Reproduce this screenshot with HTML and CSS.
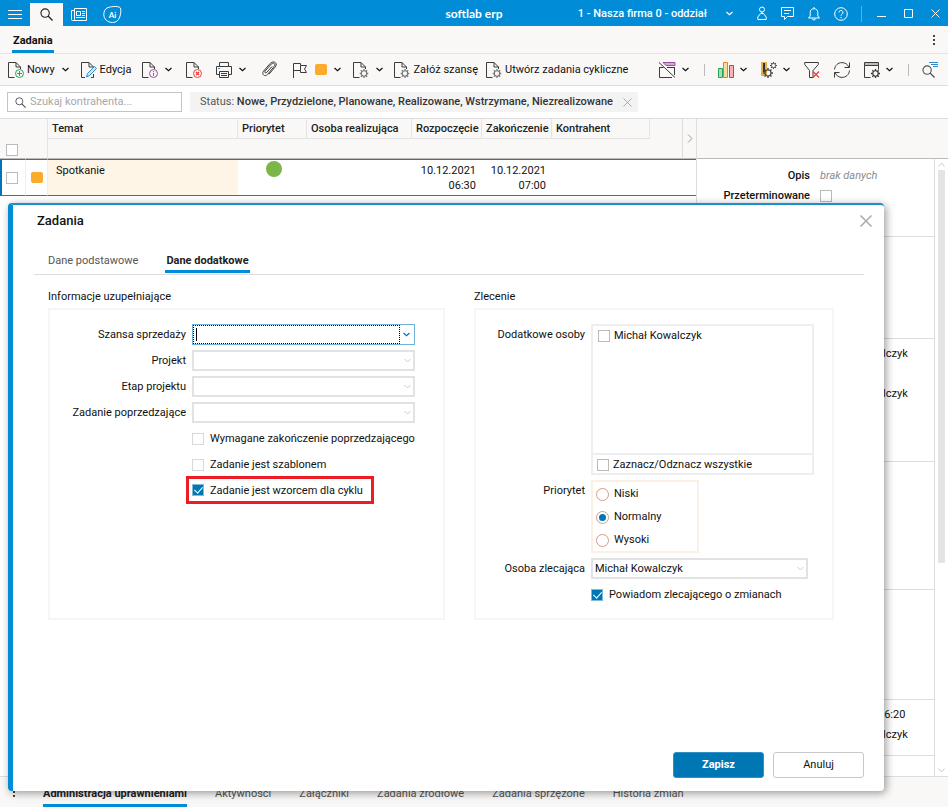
FILE: index.html
```html
<!DOCTYPE html>
<html lang="pl">

<head>
    <meta charset="utf-8">
    <title>softlab erp</title>
    <link rel="stylesheet" href="styles.css">
</head>
<body>
    <!-- shared icon parts -->
    <svg class="defs" width="0" height="0">
        <symbol id="doc" viewBox="0 0 16 16">
            <path d="M6.500 15.500H.5V.5H8l4.500 4.500V7M8 .5V5h4.500" fill="none" stroke="#3c3c3c"/>
        </symbol>
        <symbol id="cog" viewBox="0 0 10 10">
            <circle cx="5" cy="5" r="3" fill="none" stroke="currentColor" stroke-width="1.200"/>
            <path d="M5 0v2M5 8v2M0 5h2M8 5h2M1.500 1.500l1.300 1.300M7.200 7.200l1.300 1.300M1.500 8.500l1.300-1.300M7.200 2.800l1.300-1.300" stroke="currentColor" stroke-width="1.500"/>
        </symbol>
        <symbol id="doc-cog" viewBox="0 0 16 16">
            <use href="#doc" width="16" height="16"/>
            <use href="#cog" x="6.500" y="7" width="9" height="9" color="#777"/>
        </symbol>
        <symbol id="chev" viewBox="0 0 7 5">
            <path d="M.5 1l3 2.800L6.500 1" fill="none" stroke="currentColor" stroke-width="1.200"/>
        </symbol>
        <symbol id="lens" viewBox="0 0 14 14">
            <circle cx="5.500" cy="5.500" r="4.500" fill="none" stroke="currentColor" stroke-width="1.200"/>
            <path d="M8.700 8.700L13.500 13.500" stroke="currentColor" stroke-width="1.400"/>
        </symbol>
    </svg>

    <header class="topbar">
        <div class="top-left">
            <button class="top-btn" aria-label="Menu"><svg width="14" height="11" stroke="#fff"><path d="M0 1.500h14M0 5.500h14M0 9.500h14"/></svg></button>
            <button class="top-btn active" aria-label="Szukaj"><svg width="13" height="13" color="#222"><use href="#lens"/></svg></button>
            <button class="top-btn" aria-label="Aktualności"><svg width="16" height="14" fill="none" stroke="#fff"><path d="M3.500 .5h12v12h-14a1 1 0 0 1-1-1v-9h3M3.500 .5v11q0 1-1 1M5.500 3.500h4v4h-4zM11 3.500h3M11 5.500h3M11 7.500h3M5 9.500h9"/></svg></button>
            <button class="top-btn" aria-label="Asystent"><svg width="19" height="18" fill="none" stroke="#fff"><path d="M5 1.500C9 .3 17.500-.5 17.800 3c.2 6-1.300 13.500-8.300 13.500C4.500 16.500.8 13 .8 8.500.8 5.500 2 2.500 5 1.500z"/><text class="ai" x="9.500" y="12" text-anchor="middle">Ai</text></svg></button>
        </div>
        <div class="brand">softlab erp</div>
        <div class="top-right">
            <button class="company">1 - Nasza firma 0 - oddział <svg width="7" height="5"><use href="#chev"/></svg></button>
            <button class="top-icon" aria-label="Użytkownik"><svg width="10" height="15" fill="none" stroke="#fff"><circle cx="5" cy="3.500" r="2.500"/><path d="M3.500 7.500L.8 11v2.500h8.400V11L6.500 7.500zM5 6v1.500"/></svg></button>
            <button class="top-icon" aria-label="Wiadomości"><svg width="13" height="13" fill="none" stroke="#fff"><path d="M.5 .5h12v9H6.500l-3 3v-3h-3zM3 3.500h7M3 6.500h5"/></svg></button>
            <button class="top-icon" aria-label="Powiadomienia"><svg width="12" height="14" fill="none" stroke="#fff"><path d="M.5 11h11L9.800 9V5.500C9.800 3 8.200 1.700 6 1.700S2.200 3 2.200 5.500V9zM6 0v1.500M4.500 11.500a1.500 1.500 0 0 0 3 0"/></svg></button>
            <button class="top-icon" aria-label="Pomoc"><svg width="14" height="14" fill="none" stroke="#fff"><circle cx="7" cy="7" r="6.300"/><path d="M5 5.500a2 2 0 1 1 3 1.700q-1 .6-1 1.500M7 10v1.200"/></svg></button>
            <span class="top-line"></span>
            <button class="win-btn" aria-label="Minimalizuj"><svg width="9" height="9" stroke="#fff"><path d="M0 7.500h9"/></svg></button>
            <button class="win-btn" aria-label="Maksymalizuj"><svg width="9" height="9" fill="none" stroke="#fff"><path d="M.5 .5h8v8h-8z"/></svg></button>
            <button class="win-btn" aria-label="Zamknij"><svg width="9" height="9" stroke="#fff"><path d="M.5 .5l8 8M8.500 .5l-8 8"/></svg></button>
        </div>
    </header>

    <nav class="page-tabs">
        <a class="page-tab" href="#">Zadania</a>
        <button class="dots" aria-label="Więcej"><svg width="2" height="10" fill="#444"><path d="M0 0h2v2H0zM0 4h2v2H0zM0 8h2v2H0z"/></svg></button>
    </nav>

    <div class="toolbar">
        <button class="tool text new"><svg width="16" height="16"><use href="#doc"/><circle cx="11.500" cy="11.500" r="4" fill="#f9f8f7" stroke="#22a559"/><path d="M9 11.500h5M11.500 9v5" stroke="#22a559"/></svg> Nowy <svg class="arrow" width="7" height="5"><use href="#chev"/></svg></button>
        <button class="tool text"><svg width="16" height="16"><path d="M4 15.500H.5V.5H8l4.500 4.500M8 .5V5h4.500M12.500 12v3.500H10" fill="none" stroke="#3c3c3c"/><path d="M5.500 15l1-3.500 7-7 2 2-7 7z" fill="#cfe6f6" stroke="#2c8bcb"/></svg> Edycja</button>
        <button class="tool" aria-label="Informacje"><svg width="16" height="16"><use href="#doc"/><circle cx="11.500" cy="11.500" r="4" fill="#f9f8f7" stroke="#9b4f9f"/><path d="M11.500 9v1M11.500 10.800v3" stroke="#9b4f9f"/></svg><svg class="arrow" width="7" height="5"><use href="#chev"/></svg></button>
        <button class="tool" aria-label="Usuń"><svg width="16" height="16"><use href="#doc"/><circle cx="11.500" cy="11.500" r="4" fill="#f9f8f7" stroke="#e8413c"/><path d="M10 10l3 3M13 10l-3 3" stroke="#e8413c" stroke-width="1.300"/></svg></button>
        <button class="tool" aria-label="Drukuj"><svg width="16" height="16" fill="none" stroke="#3c3c3c"><path d="M3.500 4.500v-4h9v4M3.500 12.500h-3v-8h15v8h-3M3.500 9.500h9v6h-9zM5 11.500h6M5 13.500h6"/><path d="M2 6.500h2" stroke="#2c8bcb"/></svg><svg class="arrow" width="7" height="5"><use href="#chev"/></svg></button>
        <button class="tool" aria-label="Załącznik"><svg width="18" height="17" fill="none" stroke="#3c3c3c"><path d="M12 5.500L6.800 11.300c-1.300 1.400-2.800 0-1.600-1.400L11.300 3c2-2.100 4.700.1 2.900 2.400L7.500 13.500c-2.500 2.800-6.300-.2-4-3.300L9.500 3.200c1.500-2 4.500-3.200 6-1.400 1.400 1.500.6 3-.5 4.400l-6 7"/></svg></button>
        <button class="tool" aria-label="Flaga"><svg width="16" height="16" fill="none" stroke="#3c3c3c"><path d="M1.500 16V1.500h7v2h6l-2 3.500 2 3.500h-6v-2h-7M8.500 3.500v5"/></svg></button>
        <button class="tool color" aria-label="Kolor"><span class="square"></span><svg class="arrow" width="7" height="5"><use href="#chev"/></svg></button>
        <button class="tool" aria-label="Operacje"><svg width="16" height="16"><use href="#doc-cog"/></svg><svg class="arrow" width="7" height="5"><use href="#chev"/></svg></button>
        <button class="tool text"><svg width="16" height="16"><use href="#doc-cog"/></svg> Załóż szansę</button>
        <button class="tool text"><svg width="16" height="16"><use href="#doc-cog"/></svg> Utwórz zadania cykliczne</button>

        <div class="tools-right">
            <button class="tool" aria-label="Widok"><svg width="17" height="16" fill="none" stroke="#3c3c3c"><path d="M4 .5h12v3H7z" fill="#d9a6d9" stroke="#9b4f9f"/><path d="M.5 5v10.500H13M15.500 5v8M.5 5.500h4M8 5.500h8M0 .5l16 15"/></svg><svg class="arrow" width="7" height="5"><use href="#chev"/></svg></button>
            <span class="tool-line"></span>
            <button class="tool" aria-label="Wykres"><svg width="16" height="16"><path d="M.5 6.500h4v9h-4z" fill="#a9dcb9" stroke="#22a559"/><path d="M5.500 .5h4v15h-4z" fill="#fbdca0" stroke="#ee7d22"/><path d="M11.500 3.500h4v12h-4z" fill="#f5b5b5" stroke="#dc3545"/></svg><svg class="arrow" width="7" height="5"><use href="#chev"/></svg></button>
            <button class="tool" aria-label="Narzędzia"><svg width="16" height="16" color="#4a4a4a"><path d="M0 0h6v14H0z" fill="#e0b24c"/><path d="M2 1h2v9H2z" fill="#333"/><use href="#cog" x="2" y="6" width="10" height="10"/><use href="#cog" x="9" y="0" width="7" height="7"/></svg><svg class="arrow" width="7" height="5"><use href="#chev"/></svg></button>
            <button class="tool" aria-label="Wyczyść filtr"><svg width="16" height="16" fill="none" stroke="#3c3c3c"><path d="M.7 .5h13.600v2L9 8.500M.7 .5v2L5.500 8.500v7H9v-7"/><path d="M9 9.500l6 6M15 9.500l-6 6" stroke="#e8413c" stroke-width="1.300"/></svg></button>
            <button class="tool" aria-label="Odśwież"><svg width="16" height="16" fill="none" stroke="#3c3c3c"><path d="M.5 7.500C.8 3.500 4 .6 8 .6c3.200 0 5.800 1.800 7 4.900M15.500 .5v5h-5M15.500 8.500c-.3 4-3.500 6.900-7.500 6.900-3.200 0-5.800-1.800-7-4.900M.5 15.500v-5h5"/></svg></button>
            <button class="tool" aria-label="Ustawienia okna"><svg width="16" height="16" fill="none" stroke="#3c3c3c" color="#333"><path d="M.5 .5h14v3H.5z" fill="#bbb"/><path d="M6.500 15.500h-6v-12M14.500 3.500v4"/><use href="#cog" x="7" y="7" width="9" height="9"/></svg><svg class="arrow" width="7" height="5"><use href="#chev"/></svg></button>
            <span class="tool-line"></span>
            <button class="tool" aria-label="Wyszukaj"><svg width="16" height="16" color="#555"><use href="#lens" y="3" width="13" height="13"/><path d="M7 .5h9M9 2.500h7M11 4.500h5" stroke="#2c8bcb"/></svg></button>
        </div>
    </div>

    <div class="filters">
        <label class="search"><svg width="11" height="11" color="#555"><use href="#lens"/></svg><input type="text" placeholder="Szukaj kontrahenta..." aria-label="Szukaj kontrahenta"></label>
        <div class="chip">
            <span>Status: <b>Nowe, Przydzielone, Planowane, Realizowane, Wstrzymane, Niezrealizowane</b></span>
            <button class="chip-close" aria-label="Usuń filtr"><svg width="9" height="9" stroke="#aaa"><path d="M.5 .5l8 8M8.500 .5l-8 8"/></svg></button>
        </div>
    </div>

    <main class="content">
        <section class="list">
            <table class="tasks">
                <colgroup>
                    <col class="w-check"><col class="w-color"><col class="w-subject"><col class="w-prio"><col class="w-person"><col class="w-date"><col class="w-date"><col class="w-client"><col><col class="w-more">
                </colgroup>
                <thead>
                    <tr>
                        <td></td>
                        <td></td>
                        <th>Temat</th>
                        <th>Priorytet</th>
                        <th>Osoba realizująca</th>
                        <th>Rozpoczęcie</th>
                        <th>Zakończenie</th>
                        <th>Kontrahent</th>
                        <td></td>
                        <td class="more" rowspan="2"><button aria-label="Więcej kolumn"><svg width="6" height="9" fill="none" stroke="#999"><path d="M1 .5l4 4-4 4"/></svg></button></td>
                    </tr>
                    <tr class="head-filter">
                        <td class="check"><input type="checkbox" aria-label="Zaznacz wszystkie"></td>
                        <td class="edge"></td>
                        <td colspan="7"></td>
                    </tr>
                </thead>
                <tbody>
                    <tr class="task">
                        <td class="check"><input type="checkbox" aria-label="Zaznacz Spotkanie"></td>
                        <td class="mark"><span class="square"></span></td>
                        <td class="subject">Spotkanie</td>
                        <td class="prio"><span class="circle"></span></td>
                        <td></td>
                        <td class="date">10.12.2021<br>06:30</td>
                        <td class="date">10.12.2021<br>07:00</td>
                        <td colspan="3"></td>
                    </tr>
                </tbody>
            </table>
        </section>

        <aside class="details">
            <div class="details-head"></div>
            <div class="details-body">
                <div class="details-list">
                    <div class="group g1">
                        <div class="detail"><span class="name">Opis</span><i>brak danych</i></div>
                        <div class="detail"><label class="name" for="overdue">Przeterminowane</label><input type="checkbox" id="overdue"></div>
                    </div>
                    <div class="group g2"></div>
                    <div class="group g3">
                        <div class="detail"><span class="name"></span>Michał Kowalczyk</div>
                        <div class="detail"></div>
                        <div class="detail"><span class="name"></span>Michał Kowalczyk</div>
                    </div>
                    <div class="group g4"></div>
                    <div class="group g5"></div>
                    <div class="group g6">
                        <div class="detail"><span class="name"></span>10.12.2021 06:20</div>
                        <div class="detail"><span class="name"></span>Michał Kowalczyk</div>
                    </div>
                </div>
                <div class="scroll">
                    <svg width="7" height="5" fill="none" stroke="#ccc"><path d="M.5 4.500l3-3.500 3 3.500"/></svg>
                    <div class="track"><div class="thumb"></div></div>
                    <svg width="7" height="5" fill="none" stroke="#ccc"><path d="M.5 .5l3 3.500 3-3.500"/></svg>
                </div>
            </div>
        </aside>
    </main>

    <nav class="bottom-tabs">
        <button class="dots" aria-label="Więcej"><svg width="2" height="10" fill="#444"><path d="M0 0h2v2H0zM0 4h2v2H0zM0 8h2v2H0z"/></svg></button>
        <a class="bottom-tab active" href="#">Administracja uprawnieniami</a>
        <a class="bottom-tab" href="#">Aktywności</a>
        <a class="bottom-tab" href="#">Załączniki</a>
        <a class="bottom-tab" href="#">Zadania źródłowe</a>
        <a class="bottom-tab" href="#">Zadania sprzężone</a>
        <a class="bottom-tab" href="#">Historia zmian</a>
    </nav>

    <form class="dialog" role="dialog" aria-labelledby="dialog-title">
        <div class="dialog-head">
            <h1 id="dialog-title">Zadania</h1>
            <button type="button" class="close" aria-label="Zamknij okno"><svg width="12" height="12" stroke="#aaa" stroke-width="1.500"><path d="M.5 .5l11 11M11.500 .5l-11 11"/></svg></button>
        </div>
        <div class="dialog-tabs">
            <a class="dialog-tab" href="#">Dane podstawowe</a>
            <a class="dialog-tab active" href="#">Dane dodatkowe</a>
        </div>
        <div class="columns">
            <section>
                <h2>Informacje uzupełniające</h2>
                <div class="box info">
                    <label for="chance">Szansa sprzedaży</label>
                    <div class="combo">
                        <input type="text" id="chance">
                        <button type="button" aria-label="Rozwiń"><svg width="7" height="5"><use href="#chev"/></svg></button>
                    </div>
                    <label for="project">Projekt</label>
                    <select id="project"><option></option></select>
                    <label for="stage">Etap projektu</label>
                    <select id="stage"><option></option></select>
                    <label for="previous">Zadanie poprzedzające</label>
                    <select id="previous"><option></option></select>
                    <label class="tick"><input type="checkbox"> Wymagane zakończenie poprzedzającego</label>
                    <label class="tick"><input type="checkbox"> Zadanie jest szablonem</label>
                    <label class="tick marked"><input type="checkbox" checked> Zadanie jest wzorcem dla cyklu</label>
                </div>
            </section>
            <section>
                <h2>Zlecenie</h2>
                <div class="box order">
                    <span class="label">Dodatkowe osoby</span>
                    <div class="people">
                        <div class="people-list"><label><input type="checkbox"> Michał Kowalczyk</label></div>
                        <label class="people-all"><input type="checkbox"> Zaznacz/Odznacz wszystkie</label>
                    </div>
                    <span class="label">Priorytet</span>
                    <div class="radios">
                        <label><input type="radio" name="prio"> Niski</label>
                        <label><input type="radio" name="prio" checked> Normalny</label>
                        <label><input type="radio" name="prio"> Wysoki</label>
                    </div>
                    <label for="owner">Osoba zlecająca</label>
                    <select id="owner"><option>Michał Kowalczyk</option></select>
                    <label class="tick"><input type="checkbox" checked> Powiadom zlecającego o zmianach</label>
                </div>
            </section>
        </div>
        <div class="dialog-foot">
            <button type="button" class="btn save">Zapisz</button>
            <button type="button" class="btn">Anuluj</button>
        </div>
    </form>
</body>

</html>
```

FILE: styles.css
```css
* {
    box-sizing: border-box;
}
html, body {
    height: 100%;
}
body {
    display: flex;
    flex-direction: column;
    margin: 0;
    overflow: hidden;
    font: 11px/16px Roboto, "Liberation Sans", sans-serif;
    color: #111;
    background: #fff;
}
button, input, select {
    font: inherit;
    color: inherit;
}
button {
    padding: 0;
    border: none;
    background: none;
    cursor: pointer;
}
a {
    color: inherit;
    text-decoration: none;
}
svg {
    display: block;
    flex: none;
}
.defs {
    position: absolute;
}

/* check boxes and radios */
input[type=checkbox], input[type=radio] {
    appearance: none;
    display: grid;
    place-content: center;
    flex: none;
    width: 12px;
    height: 12px;
    margin: 0;
    border: 1px solid #bbb;
    background: #fff;
}
input[type=checkbox]:checked {
    border-color: #7fbadb;
    background: #0077b5;
}
input[type=checkbox]:checked::after {
    content: "";
    width: 4px;
    height: 7px;
    margin-bottom: 2px;
    border: solid #fff;
    border-width: 0 1px 1px 0;
    transform: rotate(42deg);
}
input[type=radio] {
    width: 13px;
    height: 13px;
    border-color: #d39a8c;
    border-radius: 50%;
}
input[type=radio]:checked::after {
    content: "";
    width: 7px;
    height: 7px;
    border-radius: 50%;
    background: #0077b5;
}

/* top bar */
.topbar {
    display: grid;
    grid-template-columns: 1fr auto 1fr;
    flex: none;
    height: 26px;
    color: #fff;
    background: #008cd6;
}
.top-left, .top-right {
    display: flex;
    align-items: center;
}
.top-right {
    justify-content: flex-end;
    padding-right: 8px;
}
.top-btn {
    display: flex;
    align-items: center;
    height: 24px;
    margin-top: 2px;
    padding: 0 8px;
}
.top-btn.active {
    padding: 0 10px;
    background: #f9f8f7;
}
.ai {
    font: 700 8px Lato, sans-serif;
    fill: #fff;
    stroke: none;
}
.brand {
    font: 700 12px/27px Lato, sans-serif;
}
.company {
    display: flex;
    align-items: center;
    gap: 19px;
    margin-right: 10px;
    line-height: 24px;
    font-weight: 500;
}
.top-icon {
    margin-left: 14px;
}
.top-line {
    width: 1px;
    height: 16px;
    margin-left: 13px;
    background: #55b2e3;
}
.win-btn {
    margin-left: 18px;
}
.top-line + .win-btn {
    margin-left: 15px;
}

/* page tabs */
.page-tabs {
    display: flex;
    justify-content: space-between;
    flex: none;
    height: 28px;
    padding: 0 13px 0 12px;
    border-bottom: 1px solid #e4e4e4;
    background: #f9f8f7;
}
.page-tab {
    padding: 6px 1px 0;
    border-bottom: 3px solid #008cd6;
    font-weight: 700;
    line-height: 18px;
}

/* toolbar */
.toolbar {
    display: flex;
    align-items: center;
    flex: none;
    height: 32px;
    padding-left: 4px;
    border-bottom: 1px solid #ddd;
    background: #f9f8f7;
    white-space: nowrap;
}
.tool {
    display: flex;
    align-items: center;
    padding: 0 7px;
}
.tool.text {
    gap: 3px;
    padding: 0 4px;
}
.tool.new {
    padding-right: 8px;
}
.tool.color {
    padding: 0 5px 0 0;
}
.arrow {
    margin-left: 7px;
}
.text .arrow {
    margin-left: 4px;
}
.square {
    display: block;
    width: 12px;
    height: 11px;
    border-radius: 2px;
    background: #fcaa2c;
}
.tools-right {
    display: flex;
    align-items: center;
    margin-left: auto;
    padding-right: 3px;
}
.tools-right .arrow {
    margin-left: 6px;
}
.tool-line {
    width: 1px;
    height: 12px;
    margin: 0 6px 0 8px;
    background: #bbb;
}

/* filters */
.filters {
    display: flex;
    align-items: center;
    gap: 8px;
    flex: none;
    height: 33px;
    padding-left: 7px;
    border-bottom: 1px solid #ddd;
}
.search {
    display: flex;
    align-items: center;
    gap: 2px;
    width: 175px;
    height: 20px;
    padding-left: 7px;
    border: 1px solid #c4c4c4;
}
.search input {
    width: 100%;
    padding: 0 2px;
    border: none;
    outline: none;
    background: none;
}
.search input::placeholder {
    color: #a8a8a8;
}
.chip {
    display: flex;
    align-items: center;
    gap: 10px;
    height: 20px;
    padding: 0 6px 0 10px;
    color: #555;
    background: #f3f3f3;
}
.chip b {
    font-weight: 500;
    color: #333;
}

/* task list */
.content {
    display: flex;
    flex: 1;
    min-height: 0;
}
.list {
    flex: 1;
    min-width: 0;
}
.tasks {
    width: 100%;
    table-layout: fixed;
    border-spacing: 0;
}
.w-check { width: 26px; }
.w-color { width: 22px; }
.w-subject { width: 190px; }
.w-prio { width: 69px; }
.w-person { width: 105px; }
.w-date { width: 70px; }
.w-client { width: 98px; }
.w-more { width: 14px; }
.tasks td, .tasks th {
    height: 20px;
    padding: 0;
}
.tasks thead {
    background: #f9f8f7;
}
.tasks th {
    padding-left: 4px;
    border-bottom: 1px solid #e2e2e2;
    border-right: 1px solid #e4e4e4;
    font-weight: 500;
    color: #222;
    text-align: left;
    white-space: nowrap;
}
.head-filter td {
    border-bottom: 1px solid #bbb;
}
.tasks .edge, .tasks thead td:nth-child(2) {
    border-right: 1px solid #e4e4e4;
}
.tasks .check {
    padding-left: 6px;
}
.tasks .head-filter .check {
    padding-top: 2px;
}
.tasks .more {
    border-left: 1px solid #ddd;
    border-bottom: 1px solid #bbb;
}
.more button {
    display: block;
    margin: 0 auto;
}
.tasks .task td {
    height: 37px;
    border-top: 1px solid #666;
    border-bottom: 1px solid #666;
    line-height: 15px;
}
.tasks .task .check {
    padding-left: 4px;
    border-left: 2px solid #0077b5;
    border-right: 1px solid #eee;
}
.mark {
    border-right: 1px solid #eee;
}
.tasks .mark {
    padding-left: 5px;
}
.tasks .subject {
    padding: 3px 8px;
    background: #fef5e6;
    vertical-align: top;
}
.circle {
    display: block;
    width: 16px;
    height: 16px;
    margin: 1px auto 0;
    border-radius: 50%;
    background: #7ab648;
}
.tasks .prio {
    padding-left: 3px;
    vertical-align: top;
}
.tasks .date {
    padding: 3px 6px 0 0;
    text-align: right;
    vertical-align: top;
}

/* details on the right */
.details {
    display: flex;
    flex-direction: column;
    width: 252px;
    border-left: 1px solid #ddd;
}
.details-head {
    flex: none;
    height: 40px;
    border-bottom: 1px solid #bbb;
    background: #f9f8f7;
}
.details-body {
    display: flex;
    flex: 1;
    min-height: 0;
}
.details-list {
    flex: 1;
    overflow: hidden;
    border-right: 1px solid #ddd;
}
.group {
    padding-top: 5px;
    border-bottom: 1px solid #ddd;
}
.g1 { height: 78px; padding-top: 7px; }
.g2 { height: 102px; }
.g3 { height: 123px; }
.g4 { height: 128px; }
.g5 { height: 110px; }
.g6 { height: 56px; }
.detail {
    display: flex;
    align-items: center;
    gap: 10px;
    height: 20px;
}
.detail .name {
    width: 113px;
    font-weight: 500;
    text-align: right;
}
.detail i {
    color: #8c8c8c;
}
.scroll {
    display: flex;
    flex-direction: column;
    align-items: center;
    width: 13px;
    padding: 3px 0;
}
.track {
    flex: 1;
    width: 7px;
    margin: 3px 0;
}
.thumb {
    height: 66%;
    background: #e4e4e4;
}

/* bottom tabs */
.bottom-tabs {
    display: flex;
    gap: 28px;
    flex: none;
    height: 31px;
    padding-left: 13px;
    border-top: 1px solid #ddd;
    color: #555;
    background: #f9f8f7;
}
.bottom-tab {
    padding-top: 9px;
}
.bottom-tab.active {
    border-bottom: 3px solid #008cd6;
    font-weight: 700;
    color: #222;
}

/* dialog */
.dialog {
    position: absolute;
    top: 203px;
    right: 64px;
    bottom: 16px;
    left: 8px;
    display: flex;
    flex-direction: column;
    border-top: 2px solid #1890cf;
    border-left: 5px solid #008cd6;
    border-radius: 4px;
    background: #fff;
    box-shadow: 2px 2px 8px rgba(0, 0, 0, .4);
}
.dialog h1 {
    margin: 0;
    font-size: 13px;
    font-weight: 500;
}
.dialog-head {
    display: flex;
    justify-content: space-between;
    align-items: center;
    height: 32px;
    padding: 0 12px 0 24px;
}
.dialog-tabs {
    display: flex;
    gap: 26px;
    height: 38px;
    margin: 0 20px 0 21px;
    padding: 0 13px;
    border-bottom: 1px solid #ddd;
}
.dialog-tab {
    height: 36px;
    padding: 16px 1px 0;
    color: #555;
}
.dialog-tab.active {
    border-bottom: 3px solid #008cd6;
    font-weight: 700;
    color: #222;
}
.columns {
    display: grid;
    grid-template-columns: 397fr 360fr;
    gap: 29px;
    flex: 1;
    padding: 14px 50px 0 35px;
}
.columns h2 {
    margin: 0 0 3px;
    font-size: 11px;
    font-weight: 400;
}
.box {
    display: grid;
    align-content: start;
    column-gap: 6px;
    row-gap: 5px;
    height: 312px;
    padding-top: 14px;
    border: 2px solid #f6f6f6;
}
.info {
    grid-template-columns: 136px 223px;
    grid-auto-rows: 21px;
}
.order {
    grid-template-columns: 109px 223px;
}
.box > label, .label {
    line-height: 21px;
    text-align: right;
    white-space: nowrap;
}
.box > .tick, .people label, .radios label {
    display: flex;
    align-items: center;
    gap: 6px;
}
.box > .tick {
    grid-column: 2;
    text-align: left;
}
.info .tick input {
    border-color: #d8d8d8;
}
.box .tick input:checked {
    border-color: #7fbadb;
}
.info > .marked {
    justify-self: start;
    margin: -4px 0 -3px -6px;
    padding: 0 8px 0 3px;
    border: 3px solid #ed1c24;
}
select {
    appearance: none;
    height: 21px;
    padding: 0 2px;
    border: 2px solid #e2e2e2;
    border-radius: 0;
    background: #fff url("data:image/svg+xml,%3Csvg xmlns='http://www.w3.org/2000/svg' width='7' height='5' fill='none' stroke='%23ccc'%3E%3Cpath d='M.5 1l3 3 3-3'/%3E%3C/svg%3E") no-repeat right 2px center;
}
.combo {
    position: relative;
    display: flex;
    border: 1px solid #6fb3d9;
}
.combo::before {
    content: "";
    position: absolute;
    top: 3px;
    left: 3px;
    width: 1px;
    height: 13px;
    background: #000;
}
.combo input {
    flex: 1;
    min-width: 0;
    padding: 0 3px;
    border: 1px dotted #000;
    outline: none;
    background: none;
}
.combo button {
    padding: 0 4px 0 3px;
    color: #0077b5;
}
.people {
    height: 151px;
    display: flex;
    flex-direction: column;
    border: 2px solid #eee;
}
.people-list {
    flex: 1;
    padding: 2px 5px;
    border-bottom: 2px solid #eee;
}
.people label {
    gap: 4px;
}
.people .people-all {
    height: 18px;
    padding: 2px 0 0 4px;
}
.radios {
    display: flex;
    flex-direction: column;
    justify-self: start;
    gap: 7px;
    width: 108px;
    padding: 4px 3px 3px;
    border: 2px solid #faf1e4;
}
.radios label {
    gap: 5px;
}
.order select {
    width: 217px;
}
.dialog-foot {
    display: flex;
    justify-content: flex-end;
    gap: 9px;
    padding: 0 20px 13px 0;
}
.btn {
    width: 91px;
    height: 26px;
    border: 1px solid #c8c8c8;
    border-radius: 3px;
    background: #fff;
}
.btn.save {
    border-color: #2f90c4;
    font-weight: 700;
    color: #fff;
    background: #0077b5;
}
```
